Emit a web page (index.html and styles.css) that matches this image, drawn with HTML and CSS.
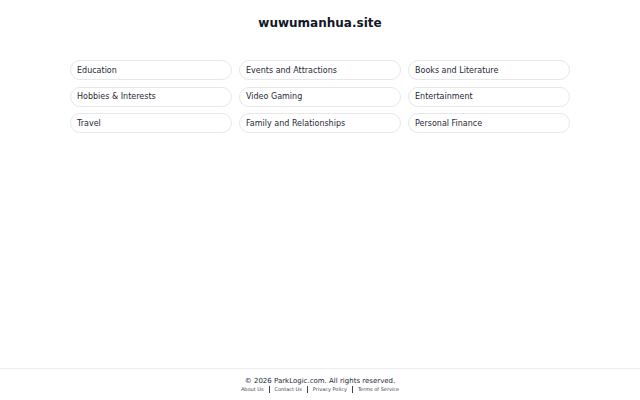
FILE: index.html
```html
<!DOCTYPE html>
<html>
<head>
<meta charset="utf-8">
<link rel="stylesheet" href="styles.css">
</head>
<body>
<div class="page">
  <main class="main">
    <h1 class="title">wuwumanhua.site</h1>
    <div class="grid">
      <a class="pill">Education</a>
      <a class="pill">Events and Attractions</a>
      <a class="pill">Books and Literature</a>
      <a class="pill">Hobbies &amp; Interests</a>
      <a class="pill">Video Gaming</a>
      <a class="pill">Entertainment</a>
      <a class="pill">Travel</a>
      <a class="pill">Family and Relationships</a>
      <a class="pill">Personal Finance</a>
    </div>
  </main>
  <footer class="footer">
    <div class="copy">© 2026 ParkLogic.com. All rights reserved.</div>
    <div class="links">
      <a class="link">About Us</a><span class="sep"></span>
      <a class="link">Contact Us</a><span class="sep"></span>
      <a class="link">Privacy Policy</a><span class="sep"></span>
      <a class="link">Terms of Service</a>
    </div>
  </footer>
</div>
</body>
</html>
```
FILE: styles.css
```css
html, body {
  margin: 0;
  padding: 0;
  background: #ffffff;
}
body {
  font-family: "DejaVu Sans", sans-serif;
  color: #111827;
}
.page {
  min-height: 100vh;
  display: flex;
  flex-direction: column;
}
.main {
  flex: 1;
}
.title {
  margin: 0;
  padding-top: 15px;
  font-size: 12px;
  line-height: 16px;
  font-weight: bold;
  text-align: center;
  color: #111827;
}
.grid {
  width: 500px;
  margin: 29px auto 0;
  display: grid;
  grid-template-columns: repeat(3, 1fr);
  column-gap: 7px;
  row-gap: 6.5px;
}
.pill {
  display: flex;
  align-items: center;
  height: 20px;
  box-sizing: border-box;
  padding: 0 6px;
  border: 1px solid #e5e7eb;
  border-radius: 999px;
  font-size: 8px;
  color: #1f2937;
}
.footer {
  border-top: 1px solid #ebedf0;
  text-align: center;
  padding-top: 7px;
  box-sizing: border-box;
  height: 32px;
}
.copy {
  font-size: 7px;
  line-height: 10px;
  color: #1f2937;
}
.links {
  display: flex;
  justify-content: center;
  align-items: center;
  line-height: 8px;
  margin-top: -1px;
}
.link {
  font-size: 5px;
  color: #374151;
}
.sep {
  display: inline-block;
  width: 1px;
  height: 7px;
  background: #374151;
  margin: 0 5px;
}
```
